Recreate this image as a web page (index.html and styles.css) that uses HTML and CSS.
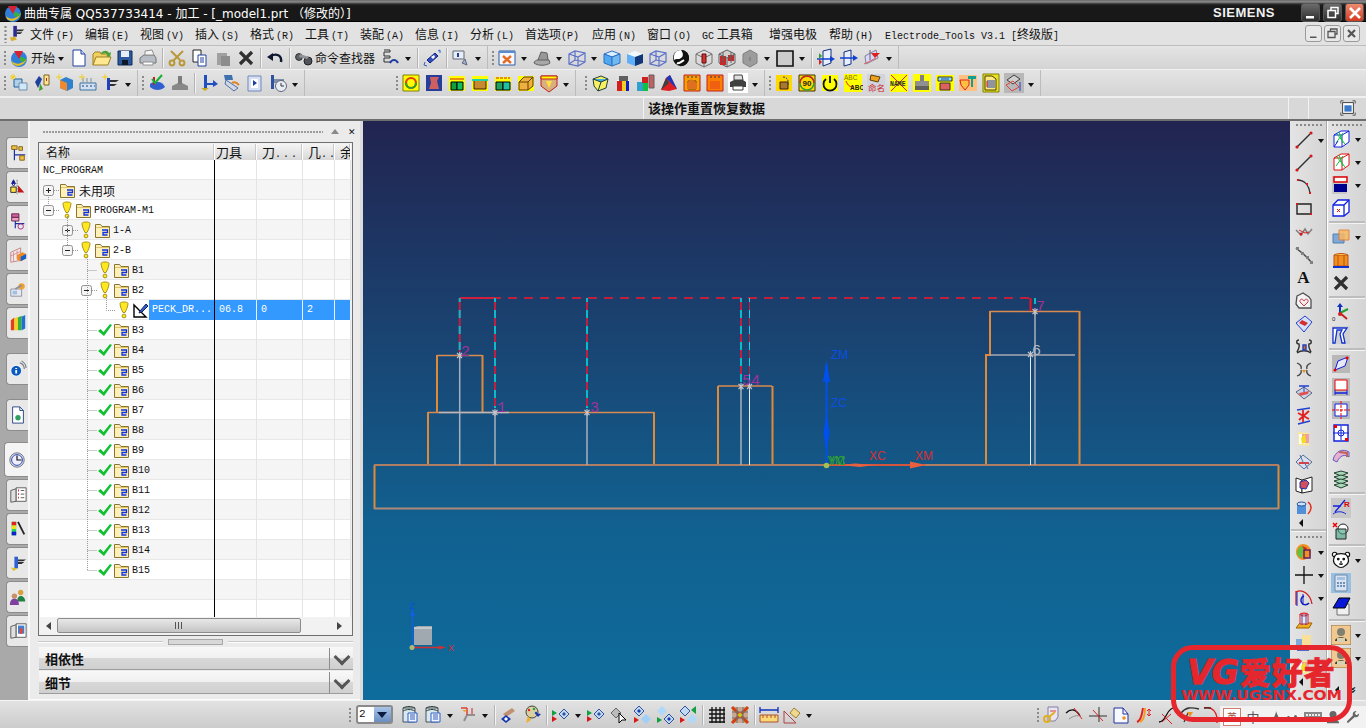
FILE: index.html
```html
<!DOCTYPE html>
<html lang="zh">
<head>
<meta charset="utf-8">
<title>NX 加工</title>
<link rel="stylesheet" href="styles.css">
</head>
<body>
<svg class="defs" xmlns="http://www.w3.org/2000/svg">
<symbol id="logo" viewBox="0 0 20 20"><circle cx="10" cy="11" r="8" fill="#2f7fd8"/><path d="M3 13c4 4 10 4 15-3-2 7-9 10-14 6z" fill="#e8c020"/><path d="M5 3l9 0-4 8z" fill="#d82030"/><path d="M11 9c3 0 5 1 6 3-2 2-4 2-6 1z" fill="#38b040"/></symbol>
<symbol id="menuic" viewBox="0 0 20 20"><path d="M7 1h4v12H7z" fill="#2a2a90"/><path d="M11 5h8l-2 2h-6zM11 8h6l-2 2h-4z" fill="#303030"/><path d="M3 14l6-1 2 3-6 2z" fill="#d8b030"/></symbol>
<symbol id="new" viewBox="0 0 20 20"><path d="M4 2h8l4 4v12H4z" fill="#fff" stroke="#2040a0"/><path d="M12 2v4h4" fill="#cde" stroke="#2040a0"/></symbol>
<symbol id="open" viewBox="0 0 20 20"><path d="M1 17V6l2-2h5l1 2h7v3" fill="#f0d060" stroke="#a08020"/><path d="M1 17l3-8h15l-3 8z" fill="#ffe890" stroke="#a08020"/><path d="M9 5c3-3 6-3 8 0l2-1-1 5-4-1 2-1c-2-2-4-2-6-1z" fill="#48a030"/></symbol>
<symbol id="save" viewBox="0 0 20 20"><path d="M3 3h14v14H3z" fill="#2c5a9c" stroke="#0c2a5c"/><path d="M6 3h8v6H6z" fill="#e8eef8"/><path d="M7 12h6v5H7z" fill="#101828"/></symbol>
<symbol id="print" viewBox="0 0 20 20"><path d="M2 10l4-3h10l2 3v5H2z" fill="#b8bcc4" stroke="#707478"/><path d="M7 3l7-1 2 5H7z" fill="#f4f4f4" stroke="#909090"/><path d="M5 14h10v3H5z" fill="#fff" stroke="#909090"/></symbol>
<symbol id="cut" viewBox="0 0 20 20" fill="none" stroke="#b89838" stroke-width="2"><path d="M4 3l9 9M16 3L6 13"/><circle cx="5" cy="15" r="2.4"/><circle cx="15" cy="15" r="2.4"/></symbol>
<symbol id="copy" viewBox="0 0 20 20"><path d="M3 2h8v12H3z" fill="#fff" stroke="#222"/><path d="M8 7h8v11H8z" fill="#fff" stroke="#2040a0"/><path d="M10 10h4M10 12h4M10 14h4" stroke="#2040a0"/></symbol>
<symbol id="paste" viewBox="0 0 20 20"><path d="M4 5h10v12H4z" fill="#a0a0a0"/><path d="M8 8h9v10H8z" fill="#8c8c8c"/></symbol>
<symbol id="del" viewBox="0 0 20 20"><path d="M4 4l12 12M16 4L4 16" stroke="#303030" stroke-width="3.2"/></symbol>
<symbol id="undo" viewBox="0 0 20 20"><path d="M6 8c5-3 11-1 10 6" fill="none" stroke="#101830" stroke-width="2.4"/><path d="M2 9l6-4 0 8z" fill="#101830"/></symbol>
<symbol id="binoc" viewBox="0 0 20 20"><circle cx="5" cy="9" r="3.4" fill="#606468" stroke="#303030"/><circle cx="14" cy="13" r="4" fill="#505458" stroke="#202020"/><path d="M6 6l9 3-2 2-8-2z" fill="#909498"/></symbol>
<symbol id="role" viewBox="0 0 20 20" fill="none" stroke="#303030"><path d="M3 2h6v2H3v4h6v2H3v4h6"/><path d="M9 15c2-4 6-4 8 0" stroke="#2040a0" stroke-width="2"/></symbol>
<symbol id="orient" viewBox="0 0 20 20"><path d="M5 12l8-7 3 3-8 7z" fill="#3050c0" stroke="#102080"/><path d="M9 9l3-2 1 2-2 2z" fill="#fff"/><path d="M2 17l3 1M16 3l2-1M3 14l-1 3M18 5l0-3" stroke="#3060c0"/></symbol>
<symbol id="info" viewBox="0 0 20 20"><path d="M2 3h11v8H2z" fill="#e8eef8" stroke="#606878"/><path d="M7 5v4" stroke="#2040a0" stroke-width="2"/><path d="M14 11l2 6-5-2z" fill="#a0b0d0" stroke="#606878"/></symbol>
<symbol id="win" viewBox="0 0 20 20"><path d="M2 3h16v14H2z" fill="#f4f8ff" stroke="#2a5aa0"/><path d="M2 3h16v2H2z" fill="#5a8ad0"/><path d="M6 8l8 7M14 8l-8 7" stroke="#e86a20" stroke-width="2.4"/></symbol>
<symbol id="shell" viewBox="0 0 20 20"><path d="M2 15c0-3 7-5 15-3l1 3c-4 3-12 3-16 0z" fill="#a8a8a8" stroke="#606060"/><path d="M6 12l3-8 6 1 1 7z" fill="#989898" stroke="#606060"/></symbol>
<symbol id="wcube" viewBox="0 0 20 20" fill="none" stroke="#5a70c8" stroke-width="1.2"><path d="M2 6l6-3 10 2v9l-7 4-9-2z"/><path d="M2 6l9 3 7-4M11 9v9M8 3v9l-6 4M8 12l10 2"/></symbol>
<symbol id="scube" viewBox="0 0 20 20"><path d="M2 6l8-3 8 3-8 3z" fill="#d8f0ff" stroke="#3070c0"/><path d="M2 6l8 3v9l-8-3z" fill="#50a8f0" stroke="#3070c0"/><path d="M18 6l-8 3v9l8-3z" fill="#70b8f0" stroke="#3070c0"/></symbol>
<symbol id="bcube" viewBox="0 0 20 20"><path d="M2 6l8-3 8 3-8 3z" fill="#f0f8ff"/><path d="M2 6l8 3v9l-8-3z" fill="#60b0f8"/><path d="M18 6l-8 3v9l8-3z" fill="#103878"/></symbol>
<symbol id="swirl" viewBox="0 0 20 20"><circle cx="10" cy="10" r="8" fill="#111"/><path d="M10 2c-5 3-1 7 0 8 2 2 2 6-2 8 5 1 10-3 10-8s-4-8-8-8z" fill="#111"/><path d="M3 12c2-2 5 0 7-2 2-1 3-4 0-8C5 2 2 6 3 12z" fill="#fff"/><path d="M6 15c2 1 4-1 7-3" stroke="#fff" stroke-width="2" fill="none"/></symbol>
<symbol id="rcube" viewBox="0 0 20 20" fill="none" stroke="#707070"><path d="M2 6l8-4 8 4v9l-8 4-8-4z"/><path d="M2 6l8 4 8-4M10 10v9"/><path d="M8 6h4v9H8z" fill="#d03030" stroke="#601010"/></symbol>
<symbol id="rcube2" viewBox="0 0 20 20" fill="none" stroke="#606060"><path d="M2 6l8-4 8 4v9l-8 4-8-4z" fill="#d0d0d0"/><path d="M3 8h6v9H3zM11 7h6v6h-6z" fill="#c82828" stroke="none"/><path d="M2 6l8 4 8-4M10 10v9M6 4v11M14 4v11"/></symbol>
<symbol id="gcube" viewBox="0 0 20 20"><path d="M3 6l7-4 7 4v9l-7 4-7-4z" fill="#9c9c9c" stroke="#808080"/><path d="M10 9v4" stroke="#707070"/></symbol>
<symbol id="bwin" viewBox="0 0 20 20"><path d="M2 3h16v15H2z" fill="#ccc" stroke="#111" stroke-width="1.6"/></symbol>
<symbol id="arw1" viewBox="0 0 20 20"><path d="M7 3l8-2v14l-8 3z" fill="#e8f0ff" stroke="#103080"/><path d="M1 11h16" stroke="#1040d0" stroke-width="1.5"/><path d="M14 8l5 3-5 3z" fill="#1040d0"/><path d="M3 5l3 3-3 3z" fill="#30a030"/><path d="M3 11l3 3-3 3z" fill="#d02020"/></symbol>
<symbol id="arw2" viewBox="0 0 20 20"><path d="M5 4l7-2v14l-7 2z" fill="#e8f0ff" stroke="#103080"/><path d="M1 10h15" stroke="#1040d0" stroke-width="1.5"/><path d="M14 7l5 3-5 3z" fill="#1040d0"/></symbol>
<symbol id="arw3" viewBox="0 0 20 20"><path d="M3 8l11-6 2 8-12 6z" fill="#d8d8f8" stroke="#808098"/><path d="M8 2v10" stroke="#606080"/><path d="M9 5h9l-5 5z" fill="#e02020"/><path d="M2 16l12-6" stroke="#e06060"/></symbol>
<symbol id="s1" viewBox="0 0 20 20"><path d="M5 6h8v8H5z" fill="#b0d0e8" stroke="#2060a0"/><path d="M10 10h8v7h-8z" fill="#d0e8f8" stroke="#7090b0"/><path d="M4 1v6M1 4h6M2 2l4 4M6 2L2 6" stroke="#f0d020"/></symbol>
<symbol id="s2" viewBox="0 0 20 20"><path d="M3 9l4-6 3 3-4 9z" fill="#2040a0"/><path d="M8 10l3 6-4 2z" fill="#40a030"/><path d="M12 2h5v10h-5z" fill="#ffe890" stroke="#806020"/><path d="M14 5h1v3h-1z" fill="#c02020"/></symbol>
<symbol id="s3" viewBox="0 0 20 20"><path d="M5 7l6-3 7 3v8l-6 3-7-3z" fill="#3080d0"/><path d="M5 7l7 3v8l-7-3z" fill="#f08a30"/><path d="M4 1v6M1 4h6" stroke="#f0d020"/></symbol>
<symbol id="s4" viewBox="0 0 20 20"><path d="M2 10h16v7H2z" fill="#d0e0f0" stroke="#4070a0"/><path d="M4 13h2M8 13h2M12 13h2M16 13h1" stroke="#204080"/><path d="M5 5v5M9 5v5M13 5v5" stroke="#8090a0"/><path d="M4 1v6M1 4h6" stroke="#f0d020"/></symbol>
<symbol id="s5" viewBox="0 0 20 20"><path d="M6 5h3v12H6z" fill="#2040c0"/><path d="M9 7h9l-3 2H9zM9 11h7l-3 2H9z" fill="#303030"/><path d="M4 1v6M1 4h6" stroke="#f0d020"/></symbol>
<symbol id="g1" viewBox="0 0 20 20"><path d="M3 11c3-3 10-3 13 0l2 3c-4 4-11 4-15 0z" fill="#3060d0"/><path d="M7 4v8" stroke="#c02020" stroke-width="2"/><path d="M5 6l3 4 7-8" fill="none" stroke="#18b030" stroke-width="2"/></symbol>
<symbol id="g2" viewBox="0 0 20 20"><path d="M2 13l6-3h4l6 3v4H2z" fill="#888"/><path d="M8 3h4v8H8z" fill="#7c7c7c"/></symbol>
<symbol id="m1" viewBox="0 0 20 20"><path d="M5 2h3v14H5z" fill="#2050c0"/><path d="M2 15h8l-4 3z" fill="#c8a820"/><path d="M8 11h8" stroke="#2050c0" stroke-width="2"/><path d="M14 7l5 4-5 3z" fill="#2050c0"/></symbol>
<symbol id="m2" viewBox="0 0 20 20"><path d="M2 2h8l1 5H3z" fill="#4070b0"/><path d="M4 7l12 8-4 3-9-7z" fill="#d0d8e8" stroke="#5070a0"/><path d="M10 10c3-2 5 0 7 2" stroke="#e08020" stroke-width="2" fill="none"/></symbol>
<symbol id="m3" viewBox="0 0 20 20"><path d="M3 3h13v15H3z" fill="#d8e0f4" stroke="#7088b8"/><path d="M6 6h7v9H6z" fill="#fff"/><path d="M8 7v6l4-3z" fill="#2040a0"/></symbol>
<symbol id="m4" viewBox="0 0 20 20"><path d="M3 2h3v14H3z" fill="#3050a0"/><path d="M6 6h10v4H6z" fill="#8090a8"/><circle cx="13" cy="13" r="5.5" fill="#e8ecf4" stroke="#606878"/><path d="M13 10v3h3" stroke="#303030" fill="none"/></symbol>
<symbol id="y1" viewBox="0 0 20 20"><path d="M2 2h16v16H2z" fill="#ff0" stroke="#808000"/><circle cx="10" cy="10" r="5" fill="none" stroke="#e04010" stroke-width="2.2"/><path d="M5 10a5 5 0 0 0 10 0" fill="none" stroke="#30a030" stroke-width="2.2"/></symbol>
<symbol id="y2" viewBox="0 0 20 20"><path d="M2 2h16v16H2z" fill="#263e98"/><path d="M6 4h9l-2 4 2 8H5l2-6z" fill="#d06060"/></symbol>
<symbol id="y3" viewBox="0 0 20 20"><path d="M2 3h16v15H2z" fill="#ff0"/><path d="M4 9h6v8H4z" fill="#10a040" stroke="#000"/><path d="M10 9h6v8h-6z" fill="#10c060" stroke="#000"/><path d="M3 6h14" stroke="#d02020"/></symbol>
<symbol id="y4" viewBox="0 0 20 20"><path d="M2 3h16v15H2z" fill="#ff0"/><path d="M4 7h12v9H4z" fill="#c88a30" stroke="#402000"/><path d="M2 7h16" stroke="#20d0b0" stroke-width="2"/></symbol>
<symbol id="y5" viewBox="0 0 20 20"><path d="M2 4h16v14H2z" fill="#ff0"/><path d="M3 9h7v8H3z" fill="#20a060" stroke="#000"/><path d="M10 9h7v8h-7z" fill="#20c0a0" stroke="#000"/><path d="M3 5h14" stroke="#d02020" stroke-dasharray="3 1"/></symbol>
<symbol id="y6" viewBox="0 0 20 20"><path d="M2 3h16v15H2z" fill="#ff0"/><path d="M3 9l5-5h9v9l-5 4H3z" fill="#f0b040" stroke="#604000"/><path d="M3 9h9v8M12 9l5-5" stroke="#604000" fill="none"/></symbol>
<symbol id="y7" viewBox="0 0 20 20"><path d="M2 3h16v10l-8 6-8-6z" fill="#d8b080" stroke="#c02020"/><path d="M2 3h16v3H2z" fill="#ff0" stroke="#c02020"/><path d="M7 8h6l-3 7z" fill="#ffe040"/></symbol>
<symbol id="c1" viewBox="0 0 20 20"><path d="M3 6l8-3 7 3-2 9-8 3-4-5z" fill="#f8f060" stroke="#204040"/><path d="M3 6l8 3 7-3" fill="#40b0e0" stroke="#204040"/><path d="M11 9l-3 9" stroke="#204040"/></symbol>
<symbol id="c2" viewBox="0 0 20 20"><path d="M4 7h12v11H4z" fill="#fff"/><path d="M4 8h5v10H4z" fill="#d02020"/><path d="M9 8h4v10H9z" fill="#f0d020"/><path d="M13 8h3v10h-3z" fill="#1020c0"/><path d="M6 3h9v5H6z" fill="#606060"/></symbol>
<symbol id="c3" viewBox="0 0 20 20"><path d="M1 9h6v9H1z" fill="#30a0d0"/><path d="M7 9h5v9H7z" fill="#10c040"/><path d="M6 4h6v6H6z" fill="#d02020"/><path d="M13 2h5v13h-5z" fill="#c06060" stroke="#606060"/></symbol>
<symbol id="c4" viewBox="0 0 20 20"><path d="M2 17l5-12 4-3 7 14-8 2z" fill="#e02020"/><path d="M7 5l4-3 7 14-6-6z" fill="#1838c0"/><path d="M2 17l5-12 3 5z" fill="#404040"/></symbol>
<symbol id="c5" viewBox="0 0 20 20"><path d="M2 2h16v16H2z" fill="#f8a000" stroke="#c02020"/><path d="M6 8h8v8H6z" fill="#f0d040" stroke="#604000"/><path d="M5 10l4-4 6 4v6H5z" fill="#e07020"/><path d="M5 4h2M9 4h2M13 4h2" stroke="#303060"/></symbol>
<symbol id="c6" viewBox="0 0 20 20"><path d="M2 2h16v16H2z" fill="#fc8000" stroke="#c02020"/><path d="M5 8h10v8H5z" fill="#f06010"/><path d="M5 4h2M9 4h2M13 4h2" stroke="#303060"/></symbol>
<symbol id="c7" viewBox="0 0 20 20"><path d="M0 0h20v20H0z" fill="#fff"/><path d="M2 9l4-2h9l3 2v5H2z" fill="#404040"/><path d="M6 2h8l1 5H6z" fill="#e0e0e0" stroke="#404040"/><path d="M5 13h10v4H5z" fill="#fff" stroke="#404040"/></symbol>
<symbol id="d1" viewBox="0 0 20 20"><path d="M2 2h16v16H2z" fill="#ffd800"/><path d="M6 9h8v7H6z" fill="#a87830" stroke="#402000"/><path d="M9 4c4 0 6 3 5 8" fill="none" stroke="#2040c0" stroke-dasharray="2 1"/></symbol>
<symbol id="d3" viewBox="0 0 20 20"><path d="M2 2h16v16H2z" fill="#ff0"/><path d="M6 6a6.500 6.500 0 1 0 8 0" fill="none" stroke="#111" stroke-width="1.800"/><path d="M10 3v7" stroke="#111" stroke-width="1.800"/></symbol>
<symbol id="d7" viewBox="0 0 20 20"><path d="M1 1h18v18H1z" fill="#ff0"/><path d="M8 2h4v6H8z" fill="#808080"/><path d="M3 8h14v5H3z" fill="#909090"/><path d="M3 13h14v4H3z" fill="#606060"/></symbol>
<symbol id="d8" viewBox="0 0 20 20"><path d="M1 2h18v16H1z" fill="#ff0"/><path d="M3 4h14v4H3z" fill="#90e0e0" stroke="#333"/><path d="M6 6h8" stroke="#2040c0"/><path d="M5 10h10v7H5z" fill="#e06060" stroke="#333"/></symbol>
<symbol id="d9" viewBox="0 0 20 20"><path d="M1 2h18v16H1z" fill="#ffc080"/><path d="M2 7h9v5l-4 5-4-5z" fill="#ffc040" stroke="#e02020"/><path d="M10 3h8v3h-8zM13 6h2v8h-2z" fill="#10a090"/></symbol>
<symbol id="d10" viewBox="0 0 20 20"><path d="M2 1h16v18H2z" fill="#e8e020" stroke="#808000"/><path d="M4 3h7l4 3v11H4z" fill="#ffe880" stroke="#404000"/><path d="M6 8h8M6 10h8M6 12h8M6 14h8" stroke="#2040c0"/><path d="M6 8v6" stroke="#d02020"/></symbol>
<symbol id="d11" viewBox="0 0 20 20"><path d="M0 0h20v20H0z" fill="#b8b8b8"/><path d="M3 7l7-5 6 4-7 5z" fill="#d0d0d0" stroke="#404040"/><path d="M2 12l7-4 6 6-7 4z" fill="none" stroke="#e04040"/><path d="M16 9v9" stroke="#2040d0"/></symbol>
<symbol id="fit" viewBox="0 0 20 20"><path d="M2 5V2h3M15 2h3v3M18 15v3h-3M5 18H2v-3" fill="none" stroke="#505050"/><path d="M4 4h12v12H4z" fill="#fff" stroke="#303030"/><path d="M6 7h8v7H6z" fill="#3a78c8"/></symbol>
<symbol id="fold" viewBox="0 0 15 15"><path d="M.5 14.500V1.500h5l1.500 2h7.500v11z" fill="#fff0b8" stroke="#8a7430"/><path d="M1 4.500h13" stroke="#e0c468"/><path d="M7 7h5.500v2.500H8v2.500h4.500" fill="none" stroke="#1030e0" stroke-width="1.300"/></symbol>
<symbol id="bulb" viewBox="0 0 14 18"><path d="M3 2.500C3 .5 11 .5 11 2.500c0 3-2 7-3 9H6c-1-2-3-6-3-9z" fill="#ffe820" stroke="#a8941c"/><circle cx="7" cy="15" r="1.900" fill="#ffe820" stroke="#a8941c"/></symbol>
<symbol id="ok" viewBox="0 0 14 14"><path d="M0 8l2.500-2 3 3L12 1l2 1-8 11z" fill="#10c030"/></symbol>
<symbol id="plus" viewBox="0 0 11 11"><rect x=".5" y=".5" width="10" height="10" rx="2" fill="#f4f4f4" stroke="#909090"/><path d="M3 5.500h5M5.500 3v5" stroke="#222"/></symbol>
<symbol id="minus" viewBox="0 0 11 11"><rect x=".5" y=".5" width="10" height="10" rx="2" fill="#f4f4f4" stroke="#909090"/><path d="M3 5.500h5" stroke="#222"/></symbol>
<symbol id="opdr" viewBox="0 0 16 16"><path d="M1 15V3l12 12z" fill="#fff" stroke="#000" stroke-width="1.400"/><path d="M7 9l6-7 2 2-6 6-3 1z" fill="#3060c8" stroke="#102060"/></symbol>
<symbol id="line" viewBox="0 0 20 20"><path d="M3 17L16 4" stroke="#303030" stroke-width="1.400"/><circle cx="3" cy="17" r="1.600" fill="#d81818"/><circle cx="17" cy="3" r="1.600" fill="#d81818"/></symbol>
<symbol id="arc" viewBox="0 0 20 20"><path d="M3 4c8 0 12 6 13 13" fill="none" stroke="#303030" stroke-width="1.400"/><path d="M3 3h2v2H3zM15 16h2v2h-2zM12 7h2v2h-2z" fill="#d81818"/></symbol>
<symbol id="rect" viewBox="0 0 20 20"><path d="M3 5h14v10H3z" fill="none" stroke="#222" stroke-width="1.400"/><path d="M2 4h2v2H2zM16 14h2v2h-2z" fill="#d81818"/></symbol>
<symbol id="spl" viewBox="0 0 20 20"><path d="M2 8l5 5 4-6 3 5 4-5" fill="none" stroke="#808080" stroke-width="1.500"/><path d="M5 8l6 3 4-1" fill="none" stroke="#e02020"/><circle cx="7" cy="12" r="1.500" fill="#d81818"/></symbol>
<symbol id="spl2" viewBox="0 0 20 20"><path d="M2 3c4 4 8 5 16 15" fill="none" stroke="#505050" stroke-width="1.500"/><path d="M2 2h3v3H2zM7 7h3v3H7zM12 11h3v3h-3zM16 16h3v3h-3z" fill="#808080"/></symbol>
<symbol id="heart" viewBox="0 0 20 20"><path d="M3 5l6-3 6 4 2 3v8H5l-3-4z" fill="#f4f4f4" stroke="#505050" stroke-width="1.300"/><path d="M10 15l-4-4c-1-3 3-4 4-1 1-3 5-2 4 1z" fill="#f8e8e8" stroke="#c04050"/></symbol>
<symbol id="sf1" viewBox="0 0 20 20"><path d="M2 9l9-7 7 6-8 10z" fill="#d8e0f8" stroke="#2040d0"/><path d="M5 9l6 3 3-3-6-3z" fill="#d03030"/></symbol>
<symbol id="sf2" viewBox="0 0 20 20" fill="none" stroke="#303030" stroke-width="1.400"><path d="M5 3c-3 0-3 4 0 4 1 3-1 6-2 8M15 3c3 0 3 4 0 4-1 3 1 6 2 8M3 16c4-3 10-3 14 0"/><path d="M9 8h3v5H9z" fill="#e06020" stroke="#2040c0"/></symbol>
<symbol id="sf3" viewBox="0 0 20 20" fill="none" stroke="#404040" stroke-width="1.300"><path d="M3 3c3 1 5 3 4 6M17 3c-3 1-5 3-4 6M3 16c3-1 5-3 4-6M17 16c-3-1-5-3-4-6"/><path d="M8 10h4l-2 3z" fill="#e09020" stroke="none"/></symbol>
<symbol id="sf4" viewBox="0 0 20 20"><path d="M2 9l8-5 8 6-8 6z" fill="#c8d8e8" stroke="#606080"/><path d="M5 10l10-2-1 3-8 2z" fill="#e05050"/><path d="M5 3h10" stroke="#2040d0" stroke-width="1.500"/><path d="M10 3v6" stroke="#2040d0"/></symbol>
<symbol id="sf5" viewBox="0 0 20 20"><path d="M3 4l13-2M4 18l12-3" stroke="#2040d0" stroke-width="1.300"/><path d="M9 4v12M4 7l11 6M15 5L5 14" stroke="#e02020" stroke-width="1.800"/></symbol>
<symbol id="sf6" viewBox="0 0 20 20"><path d="M4 3l11 1v13l-11-1z" fill="#f8e898"/><path d="M5 5h6v10H5z" fill="#fff"/><path d="M8 5h7v9H8z" fill="#f0a0a0"/><path d="M7 9l4-4 1 8-4 2z" fill="#f0e020"/></symbol>
<symbol id="sf7" viewBox="0 0 20 20"><path d="M2 10l7-7 9 7-8 7z" fill="#d8e0ec" stroke="#5070a0"/><path d="M5 11h10" stroke="#e04040" stroke-width="2"/><path d="M6 3l3 7M14 17l-4-7" stroke="#5070a0"/></symbol>
<symbol id="sf8" viewBox="0 0 20 20"><path d="M2 3l6 2v13l-6-2z" fill="#fff" stroke="#222"/><path d="M8 5l10-3v14L8 18z" fill="#fff" stroke="#222"/><path d="M6 7l6-2 3 3-3 6-6-1z" fill="#d05060" stroke="#2030a0"/></symbol>
<symbol id="sf9" viewBox="0 0 20 20"><path d="M3 6h9v10H3z" fill="#5090d8"/><ellipse cx="7.500" cy="6" rx="4.500" ry="2" fill="#d0e0f8" stroke="#2050a0"/><path d="M14 4c4 3 4 8 0 12" fill="none" stroke="#e03020" stroke-width="1.500"/></symbol>
<symbol id="wc1" viewBox="0 0 20 20"><path d="M3 6l7-4h8v11l-7 5H3z" fill="#fff" stroke="#1020e0"/><path d="M3 6h8v12M11 6l7-4" fill="none" stroke="#1020e0"/><path d="M6 5l8 10M12 4L5 14M8 3l4 11" stroke="#10c040"/><path d="M3 18l4-6" stroke="#1020e0"/></symbol>
<symbol id="wc2" viewBox="0 0 20 20"><path d="M3 6l7-4h8v11l-7 5H3z" fill="#fff" stroke="#e01010"/><path d="M3 6h8v12M11 6l7-4" fill="none" stroke="#e01010"/><path d="M6 5l8 10M12 4L5 14M8 3l4 11" stroke="#10c040"/></symbol>
<symbol id="wc3" viewBox="0 0 20 20"><path d="M1 1h15v18H1z" fill="#c8c8c8"/><path d="M3 2h13v5H3z" fill="#fff" stroke="#e00000" stroke-width="1.500"/><path d="M3 9h13v8H3z" fill="#000090"/></symbol>
<symbol id="wc4" viewBox="0 0 20 20"><path d="M2 7l5-5h11v12l-5 4H2z" fill="#fff" stroke="#1020e0" stroke-width="1.300"/><path d="M2 7h11v11M13 7l5-5" fill="none" stroke="#1020e0" stroke-width="1.300"/><path d="M6 11l3 3M9 11l-3 3" stroke="#e01010"/></symbol>
<symbol id="ov" viewBox="0 0 20 20"><path d="M2 7h11v9H2z" fill="#80a8d8" stroke="#5080b0"/><path d="M8 3h10v10H8z" fill="#f8b860" stroke="#e07830" opacity=".85"/></symbol>
<symbol id="tub" viewBox="0 0 20 20"><path d="M3 5h14v11H3z" fill="#f09020" stroke="#c05010"/><path d="M3 5c4-2 10-2 14 0" fill="#f8c050" stroke="#c05010"/><path d="M7 5v11M13 5v11" stroke="#c05010"/><path d="M2 17h16" stroke="#1030d0" stroke-width="2"/></symbol>
<symbol id="prof" viewBox="0 0 20 20"><path d="M1 1h18v18H1z" fill="#d0d0d0"/><path d="M2 3h14l-4 6 2 9h-3l-2-9 2-4H6l-2 13H2z" fill="#fff" stroke="#1030d0" stroke-width="1.300"/></symbol>
<symbol id="gb1" viewBox="0 0 20 20"><path d="M1 1h18v18H1z" fill="#b8b8b8"/><path d="M4 16l3-9 10-4-3 9z" fill="#e8e8f8" stroke="#1020e0"/><circle cx="16" cy="4" r="1.500" fill="#e00"/><circle cx="4" cy="16" r="1.500" fill="#e00"/></symbol>
<symbol id="gb2" viewBox="0 0 20 20"><path d="M1 1h18v18H1z" fill="#b8b8b8"/><path d="M4 3h12v10H4z" fill="#fff" stroke="#e00"/><path d="M4 16h12" stroke="#1020e0" stroke-width="1.500"/><path d="M4 13v5M16 13v5" stroke="#1020e0"/></symbol>
<symbol id="gb3" viewBox="0 0 20 20"><path d="M1 1h18v18H1z" fill="#b8b8b8"/><path d="M4 4h12v12H4z" fill="#fff" stroke="#1020e0"/><path d="M1 10h18M10 1v18" stroke="#e00" stroke-dasharray="3 1"/></symbol>
<symbol id="gb4" viewBox="0 0 20 20"><path d="M3 2h14v16H3z" fill="#fff" stroke="#1020e0" stroke-width="1.400"/><circle cx="10" cy="10" r="3" fill="none" stroke="#1020e0"/><path d="M2 10h16M10 3v14" stroke="#1020e0"/><path d="M3 2h3v3H3z" fill="#e00"/><path d="M14 15h3v3h-3z" fill="#e00"/></symbol>
<symbol id="sh1" viewBox="0 0 20 20"><path d="M2 14c2-9 10-12 16-8v5c-4-3-9-2-12 5z" fill="#e8b0d0" stroke="#6060c0"/><path d="M8 6l8 1v4" fill="none" stroke="#c06060" stroke-width="2"/></symbol>
<symbol id="stack" viewBox="0 0 20 20" fill="#a8d8b8" stroke="#204030"><path d="M3 4l7-2 7 2-7 3z"/><path d="M3 8l7 3 7-3-7-2z"/><path d="M3 12l7 3 7-3-7-2z"/><path d="M3 16l7 3 7-3-7-2z"/></symbol>
<symbol id="pt" viewBox="0 0 20 20"><circle cx="12" cy="8" r="5" fill="#fff" stroke="#222"/><path d="M5 8h10v10H5z" fill="#40a080" stroke="#222" fill-opacity=".6"/><path d="M2 2l4 4M6 2L2 6" stroke="#e00" stroke-width="1.500"/></symbol>
<symbol id="mul" viewBox="0 0 20 20"><path d="M9 2c5 0 8 4 8 8s-4 8-8 8-7-4-7-8 3-8 7-8z" fill="#f09020"/><path d="M3 10c1-4 4-6 7-6l-2 12c-3 0-5-3-5-6z" fill="#60c040"/><path d="M8 4l5 2-2 3z" fill="#e02020"/><path d="M10 8h6v8h-6z" fill="none" stroke="#602060" stroke-width="1.500"/></symbol>
<symbol id="cross" viewBox="0 0 20 20"><path d="M1 10h18M10 1v18" stroke="#111" stroke-width="1.300"/></symbol>
<symbol id="cv" viewBox="0 0 20 20"><path d="M2 3v14M2 4c6-3 14 1 16 12" fill="none" stroke="#d02020" stroke-width="1.300"/><path d="M3 4v14M9 6v11" stroke="#1020c0"/><path d="M10 8a4.500 4.500 0 1 0 5 7" fill="none" stroke="#1020c0" stroke-width="1.500"/></symbol>
<symbol id="cyl" viewBox="0 0 20 20"><path d="M2 17l4-5h12l-3 5z" fill="#f0b020" stroke="#a06000"/><path d="M6 3h8v10H6z" fill="#f8e8e8" stroke="#e02020"/><ellipse cx="10" cy="3.500" rx="4" ry="1.500" fill="none" stroke="#e02020"/><path d="M8 3v11M12 3v11" stroke="#2050c0"/></symbol>
<symbol id="ovb" viewBox="0 0 20 20"><path d="M2 5h10v9H2z" fill="#80a8d8"/><path d="M8 1h9v11H8z" fill="#f8e098"/><path d="M3 16h12" stroke="#2040c0" stroke-width="1.500"/></symbol>
<symbol id="bear" viewBox="0 0 22 22" fill="#fff" stroke="#111" stroke-width="1.300"><circle cx="4" cy="5" r="2.500"/><circle cx="18" cy="5" r="2.500"/><path d="M4 7c2-4 12-4 14 0 2 4 1 8-2 10-3 3-7 3-10 0-3-2-4-6-2-10z"/><circle cx="8" cy="10" r=".9" fill="#111"/><circle cx="14" cy="10" r=".9" fill="#111"/><path d="M9 15c1 1 3 1 4 0M11 12v3" fill="none"/></symbol>
<symbol id="calc" viewBox="0 0 20 20"><path d="M0 0h20v20H0z" fill="#98c0e0"/><path d="M4 2h12v16H4z" fill="#d8e4f4" stroke="#7088a8"/><path d="M6 4h8v3H6z" fill="#a8c0e0"/><path d="M6 9h2v2H6zM9 9h2v2H9zM12 9h2v2h-2zM6 12h2v2H6zM9 12h2v2H9zM12 12h2v2h-2z" fill="#7090b8"/></symbol>
<symbol id="note" viewBox="0 0 20 20"><path d="M6 8h12v11H6z" fill="#f0f0f0" stroke="#707070"/><path d="M2 12L8 2h11l-5 10z" fill="#0818d8" stroke="#000"/></symbol>
<symbol id="tig" viewBox="0 0 20 20"><path d="M0 0h20v20H0z" fill="#f0c890" stroke="#907040"/><circle cx="10" cy="7" r="4" fill="#808070"/><path d="M4 16c0-5 12-5 12 0z" fill="#404030"/><path d="M6 13h8v4H6z" fill="#d8d0b0"/></symbol>
<symbol id="bt1" viewBox="0 0 20 20"><path d="M3 3h12v14H3z" fill="#d8e8f0" stroke="#405060"/><path d="M3 3c4-2 8-2 12 0M3 6c4-2 8-2 12 0" fill="none" stroke="#304030"/><path d="M8 8h9v9H8z" fill="#f0f4ff" stroke="#3060c0"/><path d="M10 10h5M10 12h5M10 14h5" stroke="#3060c0"/></symbol>
<symbol id="bt3" viewBox="0 0 20 20"><path d="M6 16l3-6h8" fill="none" stroke="#909090" stroke-width="2"/><path d="M9 10V3M9 3H3" stroke="#e04030" stroke-width="1.500"/><path d="M4 5h5l-2 2z" fill="#f0a020"/><path d="M14 3v6" stroke="#d02020"/></symbol>
<symbol id="bt4" viewBox="0 0 20 20"><path d="M4 9l9-6 3 3-9 6z" fill="#c09070"/><path d="M2 14l5-4 5 4-5 4z" fill="#1838b0"/><path d="M5 14l2-2 2 2-2 2z" fill="#fff"/></symbol>
<symbol id="bt5" viewBox="0 0 20 20"><circle cx="10" cy="7" r="6" fill="#d8d0a0" stroke="#404040"/><circle cx="7" cy="5" r="1.200" fill="#e02020"/><circle cx="12" cy="4" r="1.200" fill="#20a040"/><circle cx="14" cy="8" r="1.200" fill="#2040d0"/><path d="M6 11l-2 7 5-3z" fill="#f0b020"/><path d="M13 8l6 1-3 3z" fill="#1838b0"/></symbol>
<symbol id="di1" viewBox="0 0 20 20"><path d="M8 9l5-5 5 5-5 5z" fill="#c0d8f0" stroke="#3050a0"/><path d="M11 9l2-2 2 2-2 2z" fill="#3050a0"/><path d="M1 5l5 3-5 3z" fill="#10a040"/><path d="M1 11l5 3-5 3z" fill="#d81818"/></symbol>
<symbol id="di2" viewBox="0 0 20 20"><path d="M2 8l5-5 5 5-5 5z" fill="#bbb" stroke="#666"/><path d="M10 8v10l3-3 4 0z" fill="#fff" stroke="#000"/></symbol>
<symbol id="di3" viewBox="0 0 20 20"><path d="M2 6l5-5 5 5-5 5z" fill="#c0d8f0" stroke="#3050a0"/><path d="M5 6l2-2 2 2-2 2z" fill="#1838b0"/><path d="M9 14l5-5 5 5-5 5z" fill="#a0d0f8"/><path d="M2 12l5 3-5 3z" fill="#d81818"/></symbol>
<symbol id="di4" viewBox="0 0 20 20"><path d="M2 6l5-5 5 5-5 5z" fill="#b0d8f8"/><path d="M9 14l5-5 5 5-5 5z" fill="#c0d8f0" stroke="#3050a0"/><path d="M12 14l2-2 2 2-2 2z" fill="#1838b0"/><path d="M2 12l5 3-5 3z" fill="#10a040"/></symbol>
<symbol id="di5" viewBox="0 0 20 20"><path d="M2 6l5-5 5 5-5 5z" fill="#c0d8f0" stroke="#3050a0"/><path d="M9 14l5-5 5 5-5 5z" fill="#b0d8f8"/><path d="M2 12l5 3-5 3z" fill="#d81818"/><path d="M18 1v8l-5-4z" fill="#10a040"/></symbol>
<symbol id="grid" viewBox="0 0 20 20"><path d="M2 5h16M2 9h16M2 13h16M2 17h16M5 2v16M9 2v16M13 2v16M17 2v16" stroke="#111" stroke-width="1.300"/></symbol>
<symbol id="gridr" viewBox="0 0 20 20"><path d="M2 2h16v16H2z" fill="#c8a890"/><path d="M2 2l16 16M18 2L2 18" stroke="#d04010" stroke-width="3"/><circle cx="10" cy="10" r="2" fill="#c0d020"/><path d="M2 7h16M2 13h16M7 2v16M13 2v16" stroke="#707070"/></symbol>
<symbol id="rul" viewBox="0 0 20 20"><path d="M1 5h18M1 2v6M19 2v6" stroke="#1030c0" stroke-width="1.300"/><path d="M1 10h18v7H1z" fill="#f8d878" stroke="#b05030"/><path d="M4 10v3M8 10v3M12 10v3M16 10v3" stroke="#b05030"/></symbol>
<symbol id="ang" viewBox="0 0 20 20"><path d="M2 18V6l12 12z" fill="none" stroke="#b04040"/><path d="M8 8l4-5 6 5-4 5z" fill="#f0d890" stroke="#a08030"/></symbol>
<symbol id="key" viewBox="0 0 20 20"><path d="M6 2h10v10l-3 4H6z" fill="#e8e4f4" stroke="#8080a0"/><path d="M8 6h6" stroke="#e04040"/><circle cx="5" cy="14" r="3" fill="none" stroke="#e0b020" stroke-width="2"/><path d="M7 12l6-5" stroke="#e0b020" stroke-width="2"/></symbol>
<symbol id="br1" viewBox="0 0 20 20"><path d="M1 8c5-5 10-4 14 3" fill="none" stroke="#111" stroke-width="1.300"/><path d="M4 14c4-3 8-4 12-3" fill="none" stroke="#909090"/><path d="M9 3l8 11" stroke="#e02020"/></symbol>
<symbol id="br2" viewBox="0 0 20 20"><path d="M1 11h18M11 2v15" stroke="#333"/><path d="M5 5l10 11" stroke="#e02020"/></symbol>
<symbol id="br3" viewBox="0 0 20 20"><path d="M3 3h9l5 6v9H3z" fill="#f8f8ff" stroke="#2030a0"/><path d="M12 3v6h5" fill="none" stroke="#2030a0"/><circle cx="13" cy="13" r="1.800" fill="#f09020"/></symbol>
<symbol id="br4" viewBox="0 0 20 20"><path d="M3 17c5-2 5-10 6-14" fill="none" stroke="#e02020" stroke-width="2"/><path d="M6 17c4-2 5-9 5-14" fill="none" stroke="#f0a020" stroke-width="2"/><path d="M15 4v6M13 6l2-2 2 2M13 9l2 2 2-2" stroke="#e02020" fill="none"/></symbol>
<symbol id="br5" viewBox="0 0 20 20"><path d="M2 17c8-1 6-11 14-14" fill="none" stroke="#111" stroke-width="1.300"/><path d="M5 9l10 10M14 9L5 17" stroke="#e02020"/></symbol>
<symbol id="br6" viewBox="0 0 20 20"><path d="M1 8c5-6 10-6 18-4M4 17c2-4 3-7 4-9" fill="none" stroke="#333" stroke-width="1.300"/><path d="M7 7h6l-3 5z" fill="#f09020"/></symbol>
<symbol id="br7" viewBox="0 0 20 20"><path d="M1 3c8-2 14 4 13 15" fill="none" stroke="#e02020" stroke-width="1.300"/><path d="M1 3h7" stroke="#111"/></symbol>
<symbol id="t1" viewBox="0 0 20 20"><path d="M3 2h6v4H3zM11 3h4v4h-4z" fill="#f0c040" stroke="#806010"/><path d="M6 6v12M6 12h12" stroke="#1830a0" stroke-width="1.300"/><path d="M12 13h5v5h-5z" fill="#f0c040" stroke="#806010"/></symbol>
<symbol id="t2" viewBox="0 0 20 20"><path d="M5 2l2 4h-4zM5 9L3 6M5 9l2-3" fill="#101890" stroke="#101890"/><path d="M2 10h6v6H2z" fill="#ffe040" stroke="#222"/><path d="M10 16V8l7 8z" fill="#c01818"/><path d="M9 2v16" stroke="#666" stroke-dasharray="2 1"/></symbol>
<symbol id="t3" viewBox="0 0 20 20"><path d="M3 2h8v4H3z" fill="#d060a0" stroke="#602040"/><path d="M3 6h8v4H3z" fill="#f0a0c8" stroke="#602040"/><path d="M7 10v8M7 13h10" stroke="#1830a0" stroke-width="1.300"/><circle cx="13" cy="16" r="3" fill="none" stroke="#a02080"/></symbol>
<symbol id="t4" viewBox="0 0 20 20"><path d="M2 7l11-5v14L2 18z" fill="#f4e8e8" stroke="#c08080"/><path d="M5 7v10M9 5v10M2 11l11-5" stroke="#d09090"/><path d="M9 10l6-3 4 2v5l-6 3-4-2z" fill="#f08a20"/><path d="M13 12l6-3v5l-6 3z" fill="#1060d0"/></symbol>
<symbol id="t5" viewBox="0 0 20 20"><path d="M2 10h12v8H2z" fill="#e8e8f0" stroke="#8890a0"/><path d="M4 12h5v4H4z" fill="#a0c0e0"/><circle cx="14" cy="7" r="3.500" fill="#f0a030"/><path d="M7 10l7-4" stroke="#909090" stroke-width="2"/></symbol>
<symbol id="t6" viewBox="0 0 20 20"><path d="M2 7l4-3v14H2z" fill="#e04020"/><path d="M6 5l4-2v15H6z" fill="#f0d020"/><path d="M10 4l4-2v16h-4z" fill="#30b040"/><path d="M14 3l4-2v15l-4 2z" fill="#2070d0"/></symbol>
<symbol id="t7" viewBox="0 0 20 20"><circle cx="8" cy="12" r="6" fill="#0a5ac0" stroke="#fff"/><path d="M7 9h2v1H7zM7 11h2v4H7z" fill="#fff"/><path d="M12 3c3 1 5 4 5 7M14 1c3 2 5 5 5 8" fill="none" stroke="#707880" stroke-width="1.200"/></symbol>
<symbol id="t8" viewBox="0 0 20 20"><path d="M4 1h8l4 4v14H4z" fill="#fff" stroke="#204080"/><path d="M12 1v4h4" fill="none" stroke="#204080"/><circle cx="10" cy="13" r="3" fill="#30a060"/></symbol>
<symbol id="clock" viewBox="0 0 20 20"><circle cx="10" cy="10" r="8" fill="#dfe4f2" stroke="#667"/><circle cx="10" cy="10" r="6" fill="#eef" stroke="#1838a0"/><path d="M10 5v5h5" fill="none" stroke="#111" stroke-width="1.300"/></symbol>
<symbol id="book" viewBox="0 0 20 20"><path d="M2 5l6-2v14l-6 1z" fill="#e0e0e0" stroke="#555"/><path d="M8 2h11v15H8z" fill="#fff" stroke="#555"/><path d="M10 5h1M10 9h1M10 13h1" stroke="#d02020" stroke-width="2"/><path d="M13 5h4M13 9h4M13 13h4" stroke="#555"/></symbol>
<symbol id="bar" viewBox="0 0 20 20"><path d="M3 2h5v15H3z" fill="#20d060"/><path d="M3 2h5v4H3z" fill="#e02020"/><path d="M3 6h5v4H3z" fill="#f0e020"/><path d="M3 13h5v4H3z" fill="#1020d0"/><path d="M10 2l7 14" stroke="#222" stroke-width="2"/></symbol>
<symbol id="wiz" viewBox="0 0 20 20"><path d="M6 3h4v13H6z" fill="#3060d0"/><path d="M10 6h9l-3 2h-6zM10 9h7l-3 2h-4z" fill="#303030"/><path d="M2 15l8 1-5 3z" fill="#e0c030"/></symbol>
<symbol id="ppl" viewBox="0 0 20 20"><circle cx="13" cy="5" r="3" fill="#d8a040"/><path d="M9 15c0-4 2-6 4-6s5 2 5 6z" fill="#208040"/><circle cx="6" cy="9" r="3" fill="#c89068"/><path d="M1 19c0-5 2-7 5-7s5 2 5 7z" fill="#8040a0"/></symbol>
<symbol id="book2" viewBox="0 0 20 20"><path d="M2 5l6-2v14l-6 1z" fill="#e0e0e0" stroke="#555"/><path d="M8 2h11v15H8z" fill="#fff" stroke="#555"/><path d="M10 4h7v9h-7z" fill="#4080d0"/><path d="M12 7h3v6h-3z" fill="#f04030"/></symbol>
<symbol id="wmin" viewBox="0 0 14 14"><path d="M2 10h8v2.500H2z" fill="#fff"/></symbol>
<symbol id="wres" viewBox="0 0 14 14" fill="none" stroke="#fff" stroke-width="1.500"><path d="M5 4V1.500h7v6h-2.500"/><path d="M2 4.500h7.500v7H2z"/></symbol>
<symbol id="wcls" viewBox="0 0 14 14"><path d="M2 2l10 10M12 2L2 12" stroke="#fff" stroke-width="2.600"/></symbol>
<symbol id="dmin" viewBox="0 0 13 13"><path d="M3 9.500h6.500V11H3z" fill="#555"/></symbol>
<symbol id="dres" viewBox="0 0 13 13" fill="none" stroke="#555" stroke-width="1.300"><path d="M4.500 4V2H11v5H9"/><path d="M2 4.500h7v6H2z"/></symbol>
<symbol id="dcls" viewBox="0 0 13 13"><path d="M3 3l7 7M10 3l-7 7" stroke="#555" stroke-width="2.200"/></symbol>
<symbol id="imoon" viewBox="0 0 14 14"><path d="M7 1c0 4-3 7-4 10h8C10 8 8 4 7 1z" fill="#666"/></symbol>
<symbol id="ikb" viewBox="0 0 20 12"><path d="M1 1h18v10H1z" fill="#888"/><path d="M3 3h2v2H3zM6 3h2v2H6zM9 3h2v2H9zM12 3h2v2h-2zM15 3h2v2h-2zM3 7h14v2H3z" fill="#eee"/></symbol>
<symbol id="iper" viewBox="0 0 16 16"><circle cx="8" cy="5" r="4" fill="#666"/><path d="M1 15c0-6 14-6 14 0z" fill="#666"/></symbol>
<symbol id="iwr" viewBox="0 0 16 16"><path d="M2 15l-1-2 7-7c-1-3 1-5 4-5l-2 3 2 2 3-2c0 3-2 5-5 4z" fill="#666"/></symbol>
</svg>

<div class="page">
  <header class="title">
    <svg class="ti"><use href="#logo"/></svg>
    <span class="ttext">曲曲专属 QQ537733414 - 加工 - [_model1.prt （修改的）]</span>
    <span class="siemens">SIEMENS</span>
    <span class="wb"><svg><use href="#wmin"/></svg></span>
    <span class="wb"><svg><use href="#wres"/></svg></span>
    <span class="wb wbx"><svg><use href="#wcls"/></svg></span>
  </header>

  <nav class="menu">
    <span class="vg"></span>
    <svg class="mi"><use href="#menuic"/></svg>
    <span class="m">文件<i>(F)</i></span>
    <span class="m">编辑<i>(E)</i></span>
    <span class="m">视图<i>(V)</i></span>
    <span class="m">插入<i>(S)</i></span>
    <span class="m">格式<i>(R)</i></span>
    <span class="m">工具<i>(T)</i></span>
    <span class="m">装配<i>(A)</i></span>
    <span class="m">信息<i>(I)</i></span>
    <span class="m">分析<i>(L)</i></span>
    <span class="m m3">首选项<i>(P)</i></span>
    <span class="m">应用<i>(N)</i></span>
    <span class="m">窗口<i>(O)</i></span>
    <span class="m m3"><i>GC</i> 工具箱</span>
    <span class="m m4">增强电极</span>
    <span class="m m5">帮助<i>(H)</i></span>
    <span class="m m6"><i>Electrode_Tools V3.1 [</i>终级版<i>]</i></span>
    <span class="mdi"><svg><use href="#dmin"/></svg></span><span class="mdi"><svg><use href="#dres"/></svg></span><span class="mdi"><svg><use href="#dcls"/></svg></span>
  </nav>

  <div class="row r1">
    <div class="tb">
      <span class="g"></span>
      <b class="t"><svg><use href="#logo"/></svg></b><span class="lbl l1">开始</span><u class="c"></u>
      <b class="t"><svg><use href="#new"/></svg></b><b class="t"><svg><use href="#open"/></svg></b><b class="t"><svg><use href="#save"/></svg></b><b class="t"><svg><use href="#print"/></svg></b><s class="s"></s>
      <b class="t"><svg><use href="#cut"/></svg></b><b class="t"><svg><use href="#copy"/></svg></b><b class="t"><svg><use href="#paste"/></svg></b><b class="t"><svg><use href="#del"/></svg></b><s class="s"></s>
      <b class="t"><svg><use href="#undo"/></svg></b><s class="s"></s>
      <b class="t"><svg><use href="#binoc"/></svg></b><span class="lbl l2">命令查找器</span>
      <b class="t"><svg><use href="#role"/></svg></b><u class="c"></u><s class="s"></s>
      <b class="t"><svg><use href="#orient"/></svg></b><s class="s"></s>
      <b class="t"><svg><use href="#info"/></svg></b><u class="c"></u>
    </div>
    <div class="tb">
      <span class="g"></span>
      <b class="t"><svg><use href="#win"/></svg></b><u class="c"></u><b class="t"><svg><use href="#shell"/></svg></b><u class="c"></u><b class="t"><svg><use href="#wcube"/></svg></b><u class="c"></u>
      <b class="t"><svg><use href="#scube"/></svg></b><b class="t"><svg><use href="#bcube"/></svg></b><b class="t"><svg><use href="#wcube"/></svg></b><b class="t"><svg><use href="#swirl"/></svg></b><b class="t"><svg><use href="#rcube"/></svg></b><b class="t"><svg><use href="#rcube2"/></svg></b><b class="t"><svg><use href="#gcube"/></svg></b><u class="c"></u>
      <b class="t"><svg><use href="#bwin"/></svg></b><u class="c"></u><s class="s"></s>
      <b class="t"><svg><use href="#arw1"/></svg></b><b class="t"><svg><use href="#arw2"/></svg></b><b class="t"><svg><use href="#arw3"/></svg></b><u class="c"></u>
    </div>
  </div>

  <div class="row r2">
    <div class="tb">
      <span class="g"></span>
      <b class="t"><svg><use href="#s1"/></svg></b><b class="t"><svg><use href="#s2"/></svg></b><b class="t"><svg><use href="#s3"/></svg></b><b class="t"><svg><use href="#s4"/></svg></b><b class="t"><svg><use href="#s5"/></svg></b><u class="c"></u>
    </div>
    <div class="tb">
      <span class="g"></span>
      <b class="t"><svg><use href="#g1"/></svg></b><b class="t"><svg><use href="#g2"/></svg></b><s class="s"></s>
      <b class="t"><svg><use href="#m1"/></svg></b><b class="t"><svg><use href="#m2"/></svg></b><b class="t"><svg><use href="#m3"/></svg></b><b class="t"><svg><use href="#m4"/></svg></b><u class="c"></u>
    </div>
    <div class="tb tb3">
      <span class="g"></span>
      <b class="t"><svg><use href="#y1"/></svg></b><b class="t"><svg><use href="#y2"/></svg></b><b class="t"><svg><use href="#y3"/></svg></b><b class="t"><svg><use href="#y4"/></svg></b><b class="t"><svg><use href="#y5"/></svg></b><b class="t"><svg><use href="#y6"/></svg></b><b class="t"><svg><use href="#y7"/></svg></b><u class="c"></u>
    </div>
    <div class="tb tb4">
      <span class="g"></span>
      <b class="t"><svg><use href="#c1"/></svg></b><b class="t"><svg><use href="#c2"/></svg></b><b class="t"><svg><use href="#c3"/></svg></b><b class="t"><svg><use href="#c4"/></svg></b><b class="t"><svg><use href="#c5"/></svg></b><b class="t"><svg><use href="#c6"/></svg></b><b class="t"><svg><use href="#c7"/></svg></b><u class="c"></u>
    </div>
    <div class="tb">
      <span class="g"></span>
      <b class="t"><svg><use href="#d1"/></svg></b>
      <b class="t"><svg viewBox="0 0 20 20"><path d="M2 2h16v16H2z" fill="#ffd800" stroke="#403000"/><circle cx="10" cy="10" r="7" fill="none" stroke="#30a030" stroke-width="1.500"/><path d="M3 10a7 7 0 0 1 14 0" fill="none" stroke="#d02020" stroke-width="1.500"/><text class="ict it90" x="5.500" y="13">90</text></svg></b>
      <b class="t"><svg><use href="#d3"/></svg></b>
      <b class="t"><svg viewBox="0 0 20 20"><path d="M1 1h18v18H1z" fill="#ff0"/><path d="M3 8c2 5 4 6 8 6" stroke="#e02020" fill="none"/><text class="ict itabc1" x="1" y="7">ABC</text><text class="ict itabc2" x="7" y="17">ABC</text></svg></b>
      <b class="t"><svg viewBox="0 0 20 20"><path d="M1 1h18v18H1z" fill="#d0d4dc"/><path d="M5 2l9 2-2 5-8-2z" fill="#f0a020" stroke="#604000"/><text class="ict itnm" x="2" y="18">命名</text></svg></b>
      <b class="t"><svg viewBox="0 0 20 20"><path d="M1 1h18v18H1z" fill="#ff0"/><path d="M2 2l16 16M18 2L2 18" stroke="#e02020"/><text class="ict itname" x="1" y="13">NAME</text></svg></b>
      <b class="t"><svg><use href="#d7"/></svg></b><b class="t"><svg><use href="#d8"/></svg></b><b class="t"><svg><use href="#d9"/></svg></b><b class="t"><svg><use href="#d10"/></svg></b><b class="t"><svg><use href="#d11"/></svg></b><u class="c"></u>
    </div>
  </div>

  <div class="status">
    <span class="st-msg">该操作重置恢复数据</span>
    <span class="st-a"></span>
    <span class="st-b"></span>
    <svg class="st-fit"><use href="#fit"/></svg>
  </div>

  <main class="main">
    <aside class="rail">
      <b class="tab"><svg><use href="#t1"/></svg></b>
      <b class="tab"><svg><use href="#t2"/></svg></b>
      <b class="tab"><svg><use href="#t3"/></svg></b>
      <b class="tab"><svg><use href="#t4"/></svg></b>
      <b class="tab"><svg><use href="#t5"/></svg></b>
      <b class="tab"><svg><use href="#t6"/></svg></b>
      <b class="tab tg1"><svg><use href="#t7"/></svg></b>
      <b class="tab tg2"><svg><use href="#t8"/></svg></b>
      <b class="tab tab-on"><svg><use href="#clock"/></svg></b>
      <b class="tab"><svg><use href="#book"/></svg></b>
      <b class="tab"><svg><use href="#bar"/></svg></b>
      <b class="tab"><svg><use href="#wiz"/></svg></b>
      <b class="tab"><svg><use href="#ppl"/></svg></b>
      <b class="tab"><svg><use href="#book2"/></svg></b>
    </aside>

    <section class="panel">
      <div class="phead"><span class="pdots"></span><span class="ptri"></span><span class="px">&#10005;</span></div>
      <div class="frame">
        <div class="thead">
          <span class="h h0">名称</span><span class="h h1">刀具</span><span class="h">刀<i>...</i></span><span class="h">几<i>..</i></span><span class="h">余</span>
        </div>
        <div class="tbody">
          <div class="tr"><span class="nm lv0"><i>NC_PROGRAM</i></span><span></span><span></span><span></span><span></span></div>
          <div class="tr alt"><span class="nm lv0"><svg class="ex"><use href="#plus"/></svg><svg class="fo fo0"><use href="#fold"/></svg><em>未用项</em></span><span></span><span></span><span></span><span></span></div>
          <div class="tr"><span class="nm lv0"><svg class="ex"><use href="#minus"/></svg><svg class="bu"><use href="#bulb"/></svg><svg class="fo"><use href="#fold"/></svg><i>PROGRAM-M1</i></span><span></span><span></span><span></span><span></span></div>
          <div class="tr alt"><span class="nm lv1"><svg class="ex"><use href="#plus"/></svg><svg class="bu"><use href="#bulb"/></svg><svg class="fo"><use href="#fold"/></svg><i>1-A</i></span><span></span><span></span><span></span><span></span></div>
          <div class="tr"><span class="nm lv1"><svg class="ex"><use href="#minus"/></svg><svg class="bu"><use href="#bulb"/></svg><svg class="fo"><use href="#fold"/></svg><i>2-B</i></span><span></span><span></span><span></span><span></span></div>
          <div class="tr alt"><span class="nm lv2 nx"><svg class="bu"><use href="#bulb"/></svg><svg class="fo"><use href="#fold"/></svg><i>B1</i></span><span></span><span></span><span></span><span></span></div>
          <div class="tr"><span class="nm lv2"><svg class="ex"><use href="#minus"/></svg><svg class="bu"><use href="#bulb"/></svg><svg class="fo"><use href="#fold"/></svg><i>B2</i></span><span></span><span></span><span></span><span></span></div>
          <div class="tr sel"><span class="nm lv3 nx"><svg class="bu"><use href="#bulb"/></svg><svg class="op"><use href="#opdr"/></svg><i class="selname">PECK_DR...</i></span><span class="sc">06.8</span><span class="sc">0</span><span class="sc">2</span><span class="sc"></span></div>
          <div class="tr"><span class="nm lv2 nx"><svg class="ck"><use href="#ok"/></svg><svg class="fo"><use href="#fold"/></svg><i>B3</i></span><span></span><span></span><span></span><span></span></div>
          <div class="tr alt"><span class="nm lv2 nx"><svg class="ck"><use href="#ok"/></svg><svg class="fo"><use href="#fold"/></svg><i>B4</i></span><span></span><span></span><span></span><span></span></div>
          <div class="tr"><span class="nm lv2 nx"><svg class="ck"><use href="#ok"/></svg><svg class="fo"><use href="#fold"/></svg><i>B5</i></span><span></span><span></span><span></span><span></span></div>
          <div class="tr alt"><span class="nm lv2 nx"><svg class="ck"><use href="#ok"/></svg><svg class="fo"><use href="#fold"/></svg><i>B6</i></span><span></span><span></span><span></span><span></span></div>
          <div class="tr"><span class="nm lv2 nx"><svg class="ck"><use href="#ok"/></svg><svg class="fo"><use href="#fold"/></svg><i>B7</i></span><span></span><span></span><span></span><span></span></div>
          <div class="tr alt"><span class="nm lv2 nx"><svg class="ck"><use href="#ok"/></svg><svg class="fo"><use href="#fold"/></svg><i>B8</i></span><span></span><span></span><span></span><span></span></div>
          <div class="tr"><span class="nm lv2 nx"><svg class="ck"><use href="#ok"/></svg><svg class="fo"><use href="#fold"/></svg><i>B9</i></span><span></span><span></span><span></span><span></span></div>
          <div class="tr alt"><span class="nm lv2 nx"><svg class="ck"><use href="#ok"/></svg><svg class="fo"><use href="#fold"/></svg><i>B10</i></span><span></span><span></span><span></span><span></span></div>
          <div class="tr"><span class="nm lv2 nx"><svg class="ck"><use href="#ok"/></svg><svg class="fo"><use href="#fold"/></svg><i>B11</i></span><span></span><span></span><span></span><span></span></div>
          <div class="tr alt"><span class="nm lv2 nx"><svg class="ck"><use href="#ok"/></svg><svg class="fo"><use href="#fold"/></svg><i>B12</i></span><span></span><span></span><span></span><span></span></div>
          <div class="tr"><span class="nm lv2 nx"><svg class="ck"><use href="#ok"/></svg><svg class="fo"><use href="#fold"/></svg><i>B13</i></span><span></span><span></span><span></span><span></span></div>
          <div class="tr alt"><span class="nm lv2 nx"><svg class="ck"><use href="#ok"/></svg><svg class="fo"><use href="#fold"/></svg><i>B14</i></span><span></span><span></span><span></span><span></span></div>
          <div class="tr"><span class="nm lv2 nx"><svg class="ck"><use href="#ok"/></svg><svg class="fo"><use href="#fold"/></svg><i>B15</i></span><span></span><span></span><span></span><span></span></div>
          <div class="tr alt"><span class="nm"></span><span></span><span></span><span></span><span></span></div>
          <div class="tr"><span class="nm"></span><span></span><span></span><span></span><span></span></div>
          <svg class="lines" viewBox="40 160 174 457" width="174" height="457">
            <path d="M48.500 195V205M54 190.500h5M54 210.500h5M67.500 216V245M73 230.500h5M73 250.500h5M87.500 255V571M87.500 270.500h10M92 290.500h5M87.500 330.500h10M87.500 350.500h10M87.500 370.500h10M87.500 390.500h10M87.500 410.500h10M87.500 430.500h10M87.500 450.500h10M87.500 470.500h10M87.500 490.500h10M87.500 510.500h10M87.500 530.500h10M87.500 550.500h10M87.500 570.500h10M106.500 296V310.500H116"/>
          </svg>
        </div>
        <div class="hs"><span class="ar al"></span><span class="thumb"><span class="grip3"></span></span><span class="ar ar-r"></span></div>
      </div>
      <div class="split"><span class="sl"></span><span class="sh"></span><span class="sl"></span></div>
      <div class="acc"><span>相依性</span><b class="chev"></b></div>
      <div class="acc"><span>细节</span><b class="chev"></b></div>
    </section>

    <span class="gutter"></span>

    <div class="canvas">
      <svg class="draw" viewBox="363 121 927 579" width="927" height="579">
        <g fill="none" stroke="#e08a38" stroke-width="2">
          <path d="M428 465V412"/><path d="M654 412V465"/><path d="M437 412V355M482.500 355V412"/>
          <path d="M718 465V386M772.500 386V465"/><path d="M986 465V355h4V311"/><path d="M1079.500 311V465"/>
          <path d="M374.500 465V509M1278.500 465V509"/>
        </g>
        <g fill="none" stroke-width="1.500" stroke="#d88a50">
          <path d="M428 412.500H654"/><path d="M437 355.500H482"/><path d="M718 386H772"/><path d="M990 311.500H1079"/>
        </g>
        <path d="M374 465H1279" stroke="#b07c62" stroke-width="2"/>
        <path d="M374 508.500H1279" stroke="#b08a78" stroke-width="2"/>
        <path d="M439 412.500h70" stroke="#b8b8c0" stroke-width="1.300"/>
        <path d="M990 355H1075" stroke="#a8a8b0" stroke-width="1.500"/>
        <g fill="none" stroke="#a8b0bc" stroke-width="1.500">
          <path d="M459.700 355V465M495 412V465M587 412V465M741 386V465M1035 311V465"/>
        </g>
        <path d="M749.500 386V465M1030.500 355V465" stroke="#e4ecf4" stroke-width="1"/>
        <path d="M460 298H1034" stroke="#c02040" stroke-width="2" stroke-dasharray="9 7"/>
        <path d="M460 298h35" stroke="#d02040" stroke-width="2"/>
        <g fill="none" stroke-width="2" stroke="#c02040">
          <path d="M459.700 298V352M495 298V408M587 298V408M741 298V382"/>
        </g>
        <path d="M749.500 298V382" stroke="#c02040"/>
        <g fill="none" stroke-width="2" stroke="#10b8c8" stroke-dasharray="8 8" stroke-dashoffset="-12">
          <path d="M459.700 298V352M495 298V408M587 298V408M741 298V382"/>
        </g>
        <path d="M749.500 298V382" stroke="#20d0e0" stroke-dasharray="8 8" stroke-dashoffset="-12"/>
        <path d="M1030.500 298V311" stroke="#f01020" stroke-width="2"/><path d="M1035 298v6" stroke="#10b8c8" stroke-width="2"/>
        <g fill="none" stroke="#c4c4cc" stroke-width="1.100">
          <path d="M457 353l5 5M462 353l-5 5M459.700 352v7M492.500 410l5 5M497.500 410l-5 5M495 409v7M584.500 410l5 5M589.500 410l-5 5M587 409v7M738.500 384l5 5M743.500 384l-5 5M741 383v7M747 384l5 5M752 384l-5 5M749.500 383v7M1028 352l5 5M1033 352l-5 5M1030.500 351v7M1032.500 309l5 5M1037.500 309l-5 5M1035 308v7"/>
        </g>
        <g class="lb">
          <text x="461" y="356">2</text><text x="497" y="412">1</text><text x="590" y="412">3</text><text x="742" y="385">5</text><text x="751" y="385">4</text><text x="1036" y="311">7</text>
        </g>
        <text class="lb6" x="1032" y="355">6</text>
        <path d="M826.500 465V365" stroke="#0050f0" stroke-width="2"/>
        <path d="M826.500 360l-3.500 22h7z" fill="#0050f0"/>
        <path d="M826.500 412l-3 21 3 21 3-21z" fill="#0050f0"/>
        <path d="M827 465H925" stroke="#e04830" stroke-width="1.500"/>
        <path d="M855 463.500l20 1.500-15 2-20-2z" fill="#e86040"/>
        <path d="M910 461.500l16 3.500-16 3.500z" fill="#e86040"/>
        <circle cx="826.500" cy="465.500" r="2.800" fill="#a0c050"/>
        <text class="ax bl" x="831" y="359">ZM</text><text class="ax bl" x="831" y="407">ZC</text>
        <text class="ax gr" x="827" y="465">YM</text><text class="ax gr" x="829" y="465">YC</text>
        <text class="ax rd" x="869" y="460">XC</text><text class="ax rd" x="915" y="460">XM</text>
        <path d="M414 627l4-1h14v19h-18z" fill="#a0a8b0"/><path d="M414 627h18v2h-18z" fill="#c4c8cc"/>
        <path d="M412.500 647V612" stroke="#1060e0" stroke-width="1.500"/>
        <path d="M412.500 608l-2.500 8h5z" fill="#1060e0"/>
        <path d="M412 647.500H440" stroke="#d03030" stroke-width="1.500"/>
        <path d="M446 647.500l-7-2v4z" fill="#d03030"/>
        <circle cx="412" cy="647.500" r="2.500" fill="#b0b878"/>
        <text class="axm bl" x="409" y="609">Z</text><text class="axm rd" x="448" y="651">X</text>
      </svg>
    </div>

    <aside class="rgt">
      <div class="col c1">
        <span class="vgrip"></span>
        <div class="ri"><b class="t"><svg><use href="#line"/></svg></b><u class="c"></u></div>
        <div class="ri"><b class="t"><svg><use href="#line"/></svg></b></div>
        <div class="ri"><b class="t"><svg><use href="#arc"/></svg></b></div>
        <div class="ri"><b class="t"><svg><use href="#rect"/></svg></b></div>
        <div class="ri"><b class="t"><svg><use href="#spl"/></svg></b></div>
        <div class="ri"><b class="t"><svg><use href="#spl2"/></svg></b></div>
        <div class="ri"><b class="t big">A</b></div>
        <div class="ri"><b class="t"><svg><use href="#heart"/></svg></b></div>
        <div class="ri"><b class="t"><svg><use href="#sf1"/></svg></b></div>
        <div class="ri"><b class="t"><svg><use href="#sf2"/></svg></b></div>
        <div class="ri"><b class="t"><svg><use href="#sf3"/></svg></b></div>
        <div class="ri"><b class="t"><svg><use href="#sf4"/></svg></b></div>
        <div class="ri"><b class="t"><svg><use href="#sf5"/></svg></b></div>
        <div class="ri"><b class="t"><svg><use href="#sf6"/></svg></b></div>
        <div class="ri"><b class="t"><svg><use href="#sf7"/></svg></b></div>
        <div class="ri"><b class="t"><svg><use href="#sf8"/></svg></b></div>
        <div class="ri"><b class="t"><svg><use href="#sf9"/></svg></b></div>
        <span class="larr"></span>
        <span class="hdiv hd2"></span>
        <span class="vgrip vg2"></span>
        <div class="ri"><b class="t"><svg><use href="#mul"/></svg></b><u class="c"></u></div>
        <div class="ri"><b class="t"><svg><use href="#cross"/></svg></b><u class="c"></u></div>
        <div class="ri"><b class="t"><svg><use href="#cv"/></svg></b><u class="c"></u></div>
        <div class="ri"><b class="t"><svg><use href="#cyl"/></svg></b></div>
        <div class="ri"><b class="t"><svg><use href="#ovb"/></svg></b></div>
        <div class="ri"><b class="t"><svg><use href="#sf6"/></svg></b><u class="c"></u></div>
        <span class="larr"></span>
      </div>
      <div class="col c2">
        <span class="vgrip"></span>
        <div class="ri"><b class="t"><svg><use href="#wc1"/></svg></b><u class="c"></u></div>
        <div class="ri"><b class="t"><svg><use href="#wc2"/></svg></b><u class="c"></u></div>
        <div class="ri"><b class="t"><svg><use href="#wc3"/></svg></b><u class="c"></u></div>
        <div class="ri"><b class="t"><svg><use href="#wc4"/></svg></b></div>
        <span class="hdiv"></span>
        <div class="ri"><b class="t"><svg><use href="#ov"/></svg></b><u class="c"></u></div>
        <div class="ri"><b class="t"><svg><use href="#tub"/></svg></b></div>
        <div class="ri"><b class="t"><svg><use href="#del"/></svg></b></div>
        <span class="hdiv"></span>
        <div class="ri"><b class="t"><svg viewBox="0 0 20 20"><path d="M9 11V3" stroke="#1030c0" stroke-width="2"/><path d="M6 5l3-4 3 4z" fill="#1030c0"/><path d="M9 11l8-4" stroke="#20a030" stroke-width="2"/><path d="M9 11l7 6" stroke="#c02020" stroke-width="2"/><circle cx="9" cy="12" r="2" fill="#d02020"/><text class="ict it0" x="1" y="19">0</text></svg></b></div>
        <div class="ri"><b class="t"><svg><use href="#prof"/></svg></b></div>
        <span class="hdiv"></span>
        <div class="ri"><b class="t"><svg><use href="#gb1"/></svg></b></div>
        <div class="ri"><b class="t"><svg><use href="#gb2"/></svg></b></div>
        <div class="ri"><b class="t"><svg><use href="#gb3"/></svg></b></div>
        <div class="ri"><b class="t"><svg><use href="#gb4"/></svg></b></div>
        <div class="ri"><b class="t"><svg><use href="#sh1"/></svg></b></div>
        <div class="ri"><b class="t"><svg><use href="#stack"/></svg></b></div>
        <span class="hdiv"></span>
        <div class="ri"><b class="t"><svg viewBox="0 0 20 20"><path d="M0 0h20v20H0z" fill="#c8c8c8"/><path d="M2 8l8 0M14 2L4 14" stroke="#1020e0" stroke-width="1.300"/><path d="M2 16c4-3 9-3 13 0" fill="none" stroke="#1020e0"/><text class="ict itr" x="13" y="9">R</text></svg></b></div>
        <div class="ri"><b class="t"><svg><use href="#pt"/></svg></b></div>
        <span class="hdiv"></span>
        <div class="ri"><b class="t"><svg><use href="#bear"/></svg></b><u class="c"></u></div>
        <div class="ri"><b class="t"><svg><use href="#calc"/></svg></b></div>
        <div class="ri"><b class="t"><svg><use href="#note"/></svg></b></div>
        <span class="hdiv"></span>
        <div class="ri"><b class="t"><svg><use href="#tig"/></svg></b><u class="c"></u></div>
        <div class="ri"><b class="t"><svg><use href="#tig"/></svg></b><u class="c"></u></div>
        <span class="dchev"><span class="larr"></span><span class="dc">&#187;</span></span>
      </div>
    </aside>
  </main>

  <footer class="bottom">
    <div class="tb tbb">
      <span class="g"></span>
      <span class="sel-box"><span class="sel-v">2</span><span class="sel-b"></span></span>
      <b class="t"><svg><use href="#bt1"/></svg></b><b class="t"><svg><use href="#bt1"/></svg></b><u class="c"></u>
      <b class="t"><svg><use href="#bt3"/></svg></b><u class="c"></u><s class="s"></s>
      <b class="t"><svg><use href="#bt4"/></svg></b><b class="t"><svg><use href="#bt5"/></svg></b><s class="s"></s>
      <b class="t"><svg><use href="#di1"/></svg></b><u class="c"></u><b class="t"><svg><use href="#di1"/></svg></b><b class="t"><svg><use href="#di2"/></svg></b><b class="t"><svg><use href="#di3"/></svg></b><b class="t"><svg><use href="#di4"/></svg></b><b class="t"><svg><use href="#di5"/></svg></b><s class="s"></s>
      <b class="t"><svg><use href="#grid"/></svg></b><b class="t"><svg><use href="#gridr"/></svg></b><s class="s"></s>
      <b class="t"><svg><use href="#rul"/></svg></b><b class="t"><svg><use href="#ang"/></svg></b><u class="c"></u>
    </div>
    <div class="tb tbr">
      <span class="g"></span>
      <b class="t"><svg><use href="#key"/></svg></b><b class="t"><svg><use href="#br1"/></svg></b><b class="t"><svg><use href="#br2"/></svg></b><b class="t"><svg><use href="#br3"/></svg></b><b class="t"><svg><use href="#br4"/></svg></b><b class="t"><svg><use href="#br5"/></svg></b><b class="t"><svg><use href="#br6"/></svg></b><b class="t"><svg><use href="#br7"/></svg></b>
    </div>
  </footer>

  <div class="ime">
    <span class="im im1">英</span><span class="im im2">中</span>
    <svg class="imi imoon"><use href="#imoon"/></svg>
    <span class="imdots"><span></span><span></span></span>
    <svg class="imi ikb"><use href="#ikb"/></svg>
    <svg class="imi iper"><use href="#iper"/></svg>
    <svg class="imi iwr"><use href="#iwr"/></svg>
  </div>

  <div class="wm">
    <div class="wm1"><span class="vgt">VG</span>爱好者</div>
    <div class="wm2">WWW.UGSNX.COM</div>
  </div>
</div>
</body>
</html>
```

FILE: styles.css
```css
* { box-sizing: border-box; }
html, body { margin: 0; padding: 0; width: 1366px; height: 728px; overflow: hidden; background: #dcdcdc; }
body { font: 12px "Noto Sans CJK SC", "Liberation Sans", sans-serif; color: #111; }
.defs { position: absolute; width: 0; height: 0; }
svg { display: block; }
.page { position: relative; width: 1366px; height: 728px; overflow: hidden; display: flex; flex-direction: column; }
.ict { font-family: "Liberation Sans", sans-serif; }
.it90 { font-size: 8px; font-weight: 700; fill: #222; }
.itabc1 { font-size: 6.500px; fill: #807000; }
.itabc2 { font-size: 6.500px; font-weight: 700; fill: #202020; }
.itnm { font: 8.500px "Noto Sans CJK SC", sans-serif; fill: #d02020; }
.itname { font: 700 6.500px "Liberation Mono", monospace; fill: #303030; }
.it0 { font-size: 6px; fill: #222; }
.itr { font-size: 8px; font-weight: 700; fill: #d00; }

/* title */
.title { height: 22px; flex: none; display: flex; align-items: center; color: #fff; background: linear-gradient(#6a6a6a 0, #8c8c8c 2px, #2a2a2a 4px, #181818 6px, #181818 21px, #000 21px); padding-top: 3px; }
.ti { width: 20px; height: 20px; margin: 0 1px 0 3px; }
.ttext { font: 12px "DejaVu Sans", "Noto Sans CJK SC", sans-serif; white-space: nowrap; }
.siemens { margin-left: auto; margin-right: 26px; font: 700 13px "Liberation Sans", sans-serif; letter-spacing: .5px; color: #f0f0f0; }
.wb { width: 19px; height: 19px; margin-right: 3px; border-radius: 3px; background: linear-gradient(#6c6c6c, #2c2c2c); border: 1px solid #555; flex: none; display: flex; align-items: center; justify-content: center; }
.wb svg { width: 14px; height: 14px; }
.wbx { background: linear-gradient(#ee8a70, #d23a20); margin-right: 2px; }

/* menu */
.menu { height: 24px; flex: none; display: flex; align-items: center; padding-left: 4px; background: #e2e2e2; border-bottom: 1px solid #bdbdbd; white-space: nowrap; }
.vg { width: 3px; height: 18px; background: radial-gradient(circle, #888 1px, transparent 1.3px) 0 0 / 3px 4px; }
.mi { width: 18px; height: 18px; margin: 0 5px 0 0; }
.m { flex: none; width: 55px; font-size: 12px; }
.m i { font: 10px "Liberation Mono", monospace; margin-left: 2px; }
.m3 { width: 67px; }
.m3 i { margin: 0; }
.m4 { width: 60px; }
.m5 { width: 56px; }
.m6 { width: 420px; }
.m6 i { margin: 0; }
.mdi { width: 17px; height: 17px; margin-right: 2px; border: 1px solid #9a9a9a; border-radius: 3px; background: #e8e8e8; flex: none; display: flex; align-items: center; justify-content: center; }
.mdi svg { width: 13px; height: 13px; }

/* toolbars */
.row { flex: none; display: flex; background: linear-gradient(#e4e4e4, #d4d4d4); border-bottom: 1px solid #f0f0f0; }
.r1 { height: 24px; }
.r2 { height: 27px; }
.tb { display: flex; align-items: center; padding: 0 3px; border-right: 1px solid #bcbcbc; flex: none; }
.g { width: 4px; height: 16px; flex: none; background: radial-gradient(circle, #8a8a8a 1px, transparent 1.3px) 0 0 / 4px 4px; }
.t { width: 23px; height: 23px; flex: none; display: flex; align-items: center; justify-content: center; font-weight: 400; }
.t svg { width: 20px; height: 20px; }
.c { width: 12px; flex: none; display: flex; justify-content: center; text-decoration: none; }
.c::after { content: ""; margin-top: 3px; border: 3.5px solid transparent; border-top: 4px solid #111; border-bottom: 0; }
.s { width: 6px; height: 20px; flex: none; display: flex; justify-content: center; text-decoration: none; }
.s::after { content: ""; width: 1px; background: #b4b4b4; box-shadow: 1px 0 #f4f4f4; }
.lbl { flex: none; font-size: 12px; }
.l1 { width: 25px; padding-left: 1px; }
.l2 { width: 64px; }
.tb3 { margin-left: 87px; }
.tb4 { margin-left: 5px; }

/* status */
.status { height: 24px; flex: none; display: flex; align-items: center; background: #d8d8d8; border-bottom: 2px solid #6e6e6e; box-shadow: inset 0 1px #f0f0f0; position: relative; }
.st-msg { margin-left: 643px; width: 645px; height: 22px; padding-left: 4px; border-left: 1px solid #f2f2f2; font-weight: 700; font-size: 13px; line-height: 21px; flex: none; }
.st-a { width: 20px; height: 22px; border-left: 1px solid #f2f2f2; flex: none; }
.st-b { width: 31px; height: 22px; border-left: 1px solid #f2f2f2; flex: none; }
.st-fit { width: 18px; height: 18px; flex: none; }

/* main */
.main { flex: none; height: 579px; display: flex; }
.rail { width: 28px; flex: none; background: #a9a9a9; display: flex; flex-direction: column; align-items: flex-end; padding-top: 16px; gap: 2px; }
.tab { width: 22px; height: 32px; flex: none; background: #e8e8e8; border: 1px solid #8c8c8c; border-right: 0; border-radius: 4px 0 0 4px; display: flex; align-items: center; justify-content: center; }
.tab svg { width: 18px; height: 18px; }
.tg1 { margin-top: 12px; }
.tg2 { margin-top: 12px; }
.tab-on { margin-top: 9px; width: 24px; height: 35px; background: #f4f4f4; }
.panel { width: 332px; flex: none; background: #ebebeb; border-left: 2px solid #f8f8f8; border-bottom: 1px solid #fafafa; padding-left: 8px; display: flex; flex-direction: column; }
.phead { height: 21px; flex: none; display: flex; align-items: center; }
.pdots { width: 280px; margin-left: 5px; height: 2px; background: repeating-linear-gradient(90deg, #9c9c9c 0 2px, transparent 2px 3px); }
.ptri { margin-left: 8px; border: 4px solid transparent; border-bottom: 5px solid #888; border-top: 0; }
.px { margin-left: 9px; font: 700 9px "DejaVu Sans", sans-serif; }

.frame { width: 315px; height: 494px; flex: none; border: 1px solid #707070; padding: 1px; background: #f0f0f0; display: flex; flex-direction: column; }
.thead { height: 16px; flex: none; display: grid; grid-template-columns: 175px 42px 46px 32px 1fr; background: linear-gradient(#f4f4f4, #d8d8d8); }
.h { font-size: 13px; line-height: 16px; padding-left: 5px; border-right: 1px solid #fff; box-shadow: inset -1px 0 #c8c8c8; white-space: nowrap; overflow: hidden; }
.h0 { padding-left: 6px; font-size: 12px; }
.h1 { padding-left: 1px; }
.h i { font: 10px "Liberation Mono", monospace; letter-spacing: 2px; }
.tbody { height: 457px; flex: none; overflow: hidden; position: relative; background: #fff; }
.tr { height: 20px; display: grid; grid-template-columns: 175px 42px 46px 32px 1fr; background: #fff; border-bottom: 1px solid #e8e8e8; }
.alt { background: #f5f5f5; }
.tr > span { border-right: 1px solid #e4e4e4; }
.tr > .nm { display: flex; align-items: center; border-right: 1px solid #000; white-space: nowrap; height: 20px; }
.nm i { font: normal 10px "Liberation Mono", monospace; letter-spacing: 0; }
.nm em { font-style: normal; font-size: 12px; line-height: 17px; margin-left: 4px; }
.lv0 { padding-left: 3px; }
.lv1 { padding-left: 22px; }
.lv2 { padding-left: 41px; }
.lv2.nx { padding-left: 58px; }
.lv3.nx { padding-left: 77px; }
.ex { width: 11px; height: 11px; flex: none; margin-right: 6px; }
.bu { width: 14px; height: 18px; flex: none; margin-right: 2px; }
.ck { width: 14px; height: 14px; flex: none; margin-right: 2px; }
.fo { width: 15px; height: 15px; flex: none; margin-right: 3px; }
.fo0 { margin-right: 0; }
.op { width: 16px; height: 16px; flex: none; }
.sel { background: #fff; color: #fff; }
.nm .selname { align-self: stretch; flex: 1; background: #3399ff; color: #fff; padding-left: 3px; line-height: 20px; }
.tr > .sc { background: #3399ff; font: 10px/20px "Liberation Mono", monospace; padding-left: 4px; border-right: 1px solid #e8f2ff; }
.lines { position: absolute; left: 0; top: 0; pointer-events: none; }
.lines path { fill: none; stroke: #9a9a9a; stroke-dasharray: 1 1; }
.hs { height: 17px; flex: none; display: flex; align-items: center; background: #f2f2f2; }
.ar { width: 0; height: 0; border: 4px solid transparent; flex: none; }
.al { border-right: 5px solid #444; border-left: 0; margin-left: 6px; }
.ar-r { border-left: 5px solid #444; border-right: 0; margin-left: 36px; }
.thumb { width: 244px; height: 15px; margin-left: 6px; flex: none; border: 1px solid #8c8c8c; border-radius: 2px; background: linear-gradient(#e8e8e8, #c4c4c4); display: flex; align-items: center; justify-content: center; }
.grip3 { width: 8px; height: 7px; background: repeating-linear-gradient(90deg, #555 0 1px, transparent 1px 3px); }
.split { height: 11px; width: 315px; flex: none; display: flex; align-items: center; gap: 5px; }
.sl { width: 125px; height: 1px; background: #c8c8c8; box-shadow: 0 1px #fff; }
.sh { width: 55px; height: 6px; background: #d8d8d8; border: 1px solid #a8a8a8; }
.acc { width: 314px; margin-left: 1px; height: 23px; flex: none; margin-bottom: 1px; display: flex; align-items: center; justify-content: space-between; padding-left: 6px; font-weight: 700; font-size: 13px; background: linear-gradient(#f8f8f8 0, #f0f0f0 50%, #d8d8d8 50%, #d0d0d0 100%); border-bottom: 1px solid #9c9c9c; }
.chev { width: 24px; height: 21px; border-left: 1px solid #8c8c8c; position: relative; flex: none; }
.chev::after { content: ""; position: absolute; left: 6px; top: 3px; width: 9px; height: 9px; border: solid #555; border-width: 0 3px 3px 0; transform: rotate(45deg); }
.gutter { width: 3px; flex: none; background: #dcdcdc; }

/* canvas */
.canvas { width: 927px; flex: none; background: linear-gradient(#222450 0, #1b3e6c 31%, #11608f 69%, #0e6c9c 100%); overflow: hidden; }
.lb text { font: 15px "Liberation Mono", monospace; fill: #a4309c; }
.lb6 { font: 15px "Liberation Mono", monospace; fill: #b8b8c0; }
.ax { font: 12px "Liberation Sans", sans-serif; }
.axm { font: 9px "Liberation Sans", sans-serif; }
.bl { fill: #0a50e0; }
.gr { fill: #30a030; }
.rd { fill: #d83030; }

/* right */
.rgt { width: 76px; flex: none; display: flex; background: #dfdfdf; }
.col { display: flex; flex-direction: column; height: 579px; overflow: hidden; background: linear-gradient(90deg, #e4e4e4, #d4d4d4); }
.c1 { width: 38px; border-right: 1px solid #fff; box-shadow: inset -1px 0 #aaa; padding-left: 2px; }
.c2 { width: 38px; }
.vgrip { height: 7px; flex: none; background: radial-gradient(circle, #8a8a8a 1px, transparent 1.3px) 0 1px / 4px 6px; margin: 0 3px; background-repeat: repeat-x; }
.c2 .vgrip { height: 6px; }
.c1 .vg2 { height: 7px; }
.ri { height: 23px; flex: none; display: flex; align-items: center; }
.c2 .ri { padding-left: 1px; }
.big { font: 700 17px "Liberation Serif", serif; }
.larr { width: 0; height: 0; flex: none; border: 4px solid transparent; border-right: 4px solid #111; border-left: 0; margin: 0 0 0 7px; }
.hdiv { height: 6px; flex: none; position: relative; }
.hdiv::after { content: ""; position: absolute; left: 1px; right: 1px; top: 2px; height: 2px; background: #bdbdbd; border-bottom: 1px solid #f4f4f4; }
.hd2 { height: 6px; margin-left: -2px; }
.dchev { display: flex; align-items: center; gap: 10px; padding-top: 14px; }
.dc { transform: rotate(90deg); font: 700 12px "DejaVu Sans", sans-serif; }

/* bottom */
.bottom { flex: none; height: 28px; display: flex; background: linear-gradient(#e2e2e2, #cccccc); align-items: flex-start; border-top: 1px solid #f4f4f4; }
.tbb { margin-left: 345px; height: 27px; border-right: 0; }
.tbr { margin-left: 215px; height: 27px; border-right: 0; }
.sel-box { width: 37px; height: 19px; margin: 0 5px 0 4px; flex: none; display: flex; border: 2px solid #8a8a8a; border-radius: 3px; background: #fff; }
.sel-v { flex: 1; font: 11px "Liberation Mono", monospace; line-height: 15px; padding-left: 1px; }
.sel-b { width: 17px; background: linear-gradient(#a8c4e8, #6a8ec0); position: relative; }
.sel-b::after { content: ""; position: absolute; left: 3px; top: 5px; border: 5px solid transparent; border-top: 6px solid #0a1a40; border-bottom: 0; }

.ime { position: absolute; left: 1220px; top: 706px; width: 146px; height: 22px; background: #f2f2f2; display: flex; align-items: center; }
.im { flex: none; text-align: center; color: #555; font-size: 12px; line-height: 16px; }
.im1 { margin-left: 3px; width: 18px; border: 1px solid #d08070; background: #fff; font-size: 10px; color: #a05040; }
.im2 { width: 24px; font-size: 13px; }
.imi { flex: none; width: 14px; height: 14px; }
.imoon { margin: 0 4px; }
.imdots { width: 10px; margin-left: 0; display: flex; gap: 4px; flex: none; align-items: center; }
.imdots span { width: 3px; height: 3px; border-radius: 50%; background: #666; }
.imdots span + span { width: 4px; height: 4px; }
.ikb { width: 20px; height: 12px; margin-left: 6px; }
.iper { margin: 0 3px; }
.iwr { margin-left: 3px; }

/* watermark */
.wm { position: absolute; left: 1171px; top: 645px; width: 181px; height: 77px; border: 5px solid #e6262d; border-radius: 22px; color: #e6262d; text-align: center; overflow: hidden; }
.wm1 { font: 900 31px/34px "Noto Sans CJK SC", sans-serif; margin-top: 4px; letter-spacing: 1px; white-space: nowrap; -webkit-text-stroke: .6px #e6262d; }
.vgt { font: italic 900 33px/34px "DejaVu Sans", sans-serif; -webkit-text-stroke: 1px #e6262d; letter-spacing: -1px; margin-right: 2px; }
.wm2 { font: 700 15.500px/16px "DejaVu Sans", sans-serif; letter-spacing: -.2px; white-space: nowrap; margin: -2px -3px 0; transform: scaleY(.85); }
```
